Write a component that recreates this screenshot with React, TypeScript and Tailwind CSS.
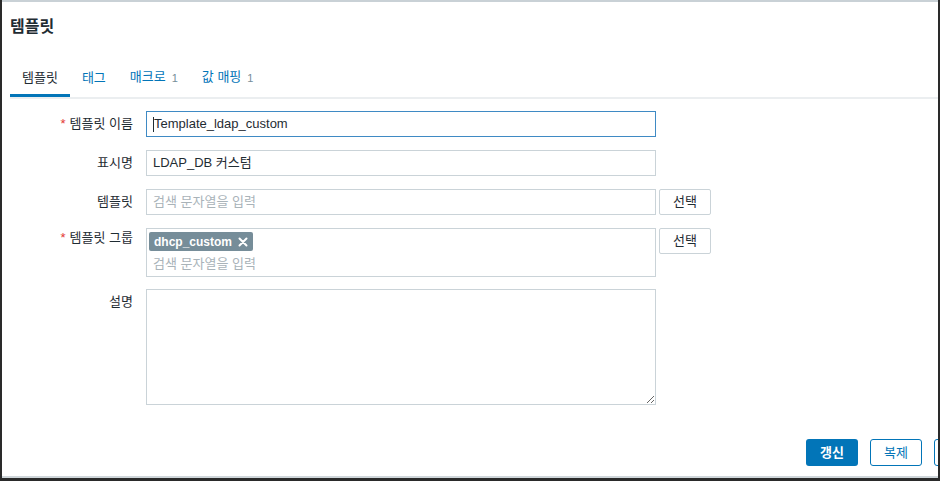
import React from "react";

const font = {
  fontFamily: '"Liberation Sans", Arial, "Noto Sans CJK KR", sans-serif',
};

function Tab({
  label,
  count,
  active,
}: {
  label: string;
  count?: string;
  active?: boolean;
}) {
  return (
    <div
      className={
        "flex items-center px-3 pb-[8px] border-b-[3px] " +
        (active ? "border-[#0275b8]" : "border-transparent")
      }
    >
      <span
        className={
          "text-[13px] leading-[16px] " +
          (active ? "text-[#1f2c33]" : "text-[#0275b8]")
        }
      >
        {label}
      </span>
      {count && (
        <span className="ml-[6px] text-[11px] leading-[16px] text-[#768d99] pt-[2px]">
          {count}
        </span>
      )}
    </div>
  );
}

function Label({
  text,
  required,
  lh = "leading-[26px]",
}: {
  text: string;
  required?: boolean;
  lh?: string;
}) {
  return (
    <div
      className={
        "w-[123px] shrink-0 text-right text-[13px] text-[#1f2c33] " + lh
      }
    >
      {required && <span className="text-[#e33734] mr-[4px]">*</span>}
      {text}
    </div>
  );
}

function SelectBtn() {
  return (
    <button className="ml-[3px] w-[52px] h-[26px] shrink-0 rounded-[2px] border border-[#cad3d8] bg-white text-[13px] text-[#1f2c33]">
      선택
    </button>
  );
}

export default function App() {
  return (
    <div
      style={font}
      className="w-[940px] h-[481px] overflow-hidden bg-white border-l-2 border-r-2 border-b-[3px] border-[#2a2a2a] flex flex-col"
    >
      <div className="h-[2px] bg-[#c9d1d6] shrink-0" />
      <div className="flex-1 flex flex-col pl-[8px] min-h-0">
        {/* Title */}
        <div className="pt-[15px] text-[16px] leading-[20px] font-bold text-[#1f2c33]">
          템플릿
        </div>

        {/* Tabs */}
        <div className="mt-[31px] flex items-end">
          <Tab label="템플릿" active />
          <Tab label="태그" />
          <Tab label="매크로" count="1" />
          <Tab label="값 매핑" count="1" />
        </div>
        <div className="h-[2px] bg-[#ebeef0]" />

        {/* Form */}
        <div className="mt-[12px] flex flex-col">
          {/* Row 1 */}
          <div className="flex items-start">
            <Label text="템플릿 이름" required />
            <div className="ml-[13px] w-[510px] h-[26px] border border-[#3f8ac4] flex items-center px-[6px] text-[13px] text-[#1f2c33]">
              <span className="w-px h-[15px] bg-[#1f2c33]" />
              <span>Template_ldap_custom</span>
            </div>
          </div>

          {/* Row 2 */}
          <div className="flex items-start mt-[13px]">
            <Label text="표시명" />
            <div className="ml-[13px] w-[510px] h-[26px] border border-[#cad3d8] flex items-center px-[6px] text-[13px] text-[#1f2c33]">
              LDAP_DB 커스텀
            </div>
          </div>

          {/* Row 3 */}
          <div className="flex items-start mt-[13px]">
            <Label text="템플릿" />
            <div className="ml-[13px] w-[510px] h-[26px] border border-[#cad3d8] flex items-center px-[6px] text-[13px] text-[#a9b3b9]">
              검색 문자열을 입력
            </div>
            <SelectBtn />
          </div>

          {/* Row 4 */}
          <div className="flex items-start mt-[13px]">
            <Label text="템플릿 그룹" required lh="leading-[20px]" />
            <div className="ml-[13px] w-[510px] h-[49px] border border-[#cad3d8] pl-[2px] pt-[3px] flex flex-col items-start">
              <div className="h-[19px] flex items-center bg-[#768d99] rounded-[2px] pl-[5px] pr-[5px] text-white text-[12px] font-bold">
                <span>dhcp_custom</span>
                <svg
                  width="10"
                  height="10"
                  viewBox="0 0 10 10"
                  className="ml-[6px]"
                >
                  <path
                    d="M1.5 1.5 L8.5 8.5 M8.5 1.5 L1.5 8.5"
                    stroke="white"
                    strokeWidth="2"
                    strokeLinecap="round"
                  />
                </svg>
              </div>
              <div className="mt-[4px] pl-[4px] text-[13px] leading-[18px] text-[#a9b3b9]">
                검색 문자열을 입력
              </div>
            </div>
            <SelectBtn />
          </div>

          {/* Row 5 */}
          <div className="flex items-start mt-[12px]">
            <Label text="설명" />
            <textarea
              readOnly
              className="ml-[13px] w-[510px] h-[116px] border border-[#cad3d8] outline-none resize-y"
            />
          </div>
        </div>

        {/* Buttons */}
        <div className="mt-[34px] flex pl-[796px] gap-[12px]">
          <button className="w-[52px] h-[27px] shrink-0 rounded-[3px] bg-[#0275b8] text-white text-[13px] font-bold">
            갱신
          </button>
          <button className="w-[52px] h-[27px] shrink-0 rounded-[3px] border border-[#0275b8] bg-white text-[#0275b8] text-[13px]">
            복제
          </button>
          <button
            aria-label="삭제"
            className="w-[52px] h-[27px] shrink-0 rounded-[3px] border border-[#0275b8] bg-white"
          />
        </div>
      </div>
      <div className="h-[2px] bg-[#cfd6da] shrink-0" />
    </div>
  );
}
